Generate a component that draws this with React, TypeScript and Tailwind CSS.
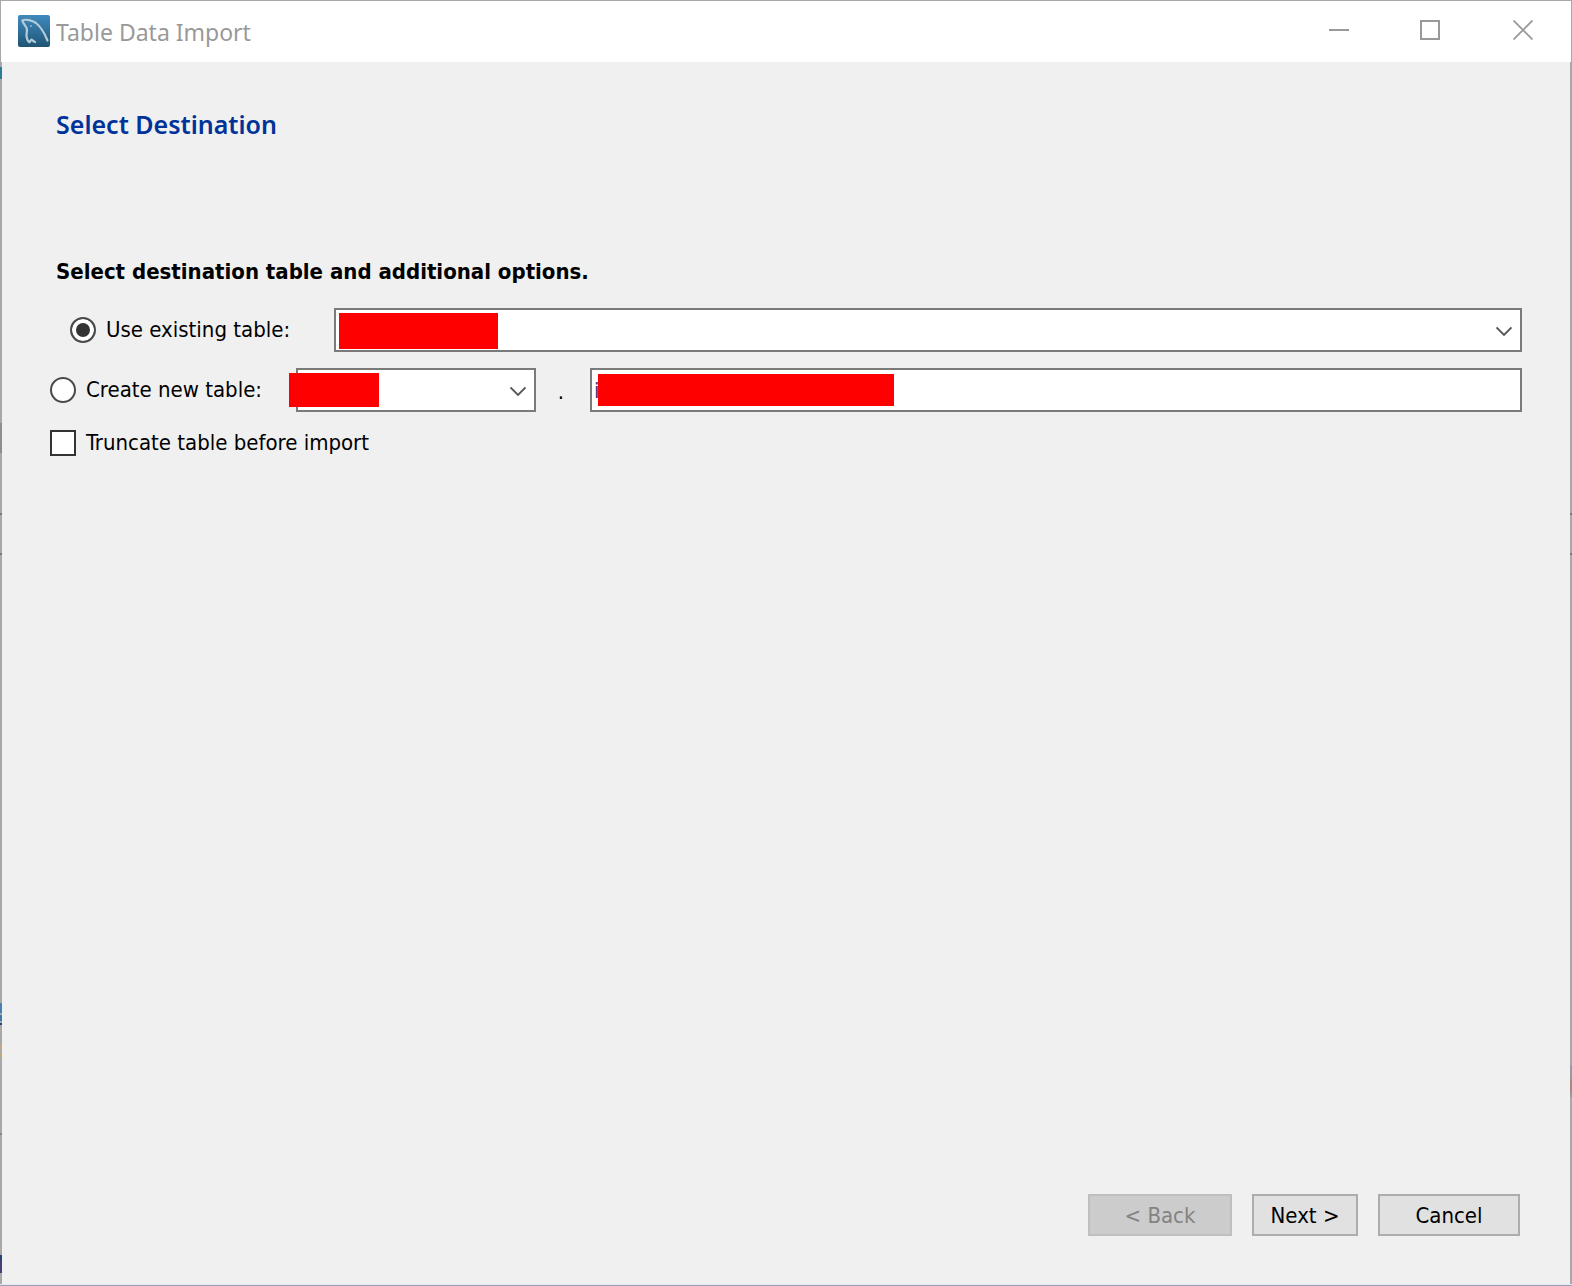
import type { ReactNode } from 'react';

// Slivers of the desktop that show through the thin window frame
const leftEdge = [
  'top-[66px] h-3 bg-[#2f7a94]',
  'top-[422px] h-[30px] bg-[#8e8e8e]',
  'top-[512px] h-0.5 bg-[#777777]',
  'top-[552px] h-0.5 bg-[#777777]',
  'top-[1002px] h-2.5 bg-[#4a7fb5]',
  'top-[1014px] h-1.5 bg-[#3f79ad]',
  'top-[1022px] h-0.5 bg-[#1f4478]',
  'top-[1044px] h-1 bg-[#c4a97c]',
  'top-[1052px] h-1 bg-[#c4a97c]',
  'top-[1132px] h-0.5 bg-[#838383]',
  'top-[1254px] h-1 bg-[#1f4478]',
  'top-[1258px] h-3.5 bg-[#453f78]',
];

const rightEdge = [
  'top-[512px] h-0.5 bg-[#777777]',
  'top-[552px] h-0.5 bg-[#777777]',
  'top-[1064px] h-8 bg-[#9a9a9c]',
  'top-[1078px] h-3.5 bg-[#a08c80]',
];

function Logo() {
  return (
    <svg className="w-8 h-8" viewBox="0 0 32 32" fill="none" aria-hidden="true">
      <defs>
        <linearGradient id="logo-bg" x1="0" y1="0" x2="0" y2="1">
          <stop offset="0" stopColor="#3f8abc" />
          <stop offset="0.5" stopColor="#2f709a" />
          <stop offset="1" stopColor="#1f5474" />
        </linearGradient>
      </defs>
      <rect width="32" height="32" rx="2" fill="url(#logo-bg)" />
      <g stroke="#b4cbd9" strokeWidth="2.2" strokeLinecap="round" strokeLinejoin="round">
        <path d="M4.5 5.5C8 3.8 14 5.2 18 8C23 12 26.5 18 29.5 25.5" />
        <path d="M4.5 5.5C5 8.5 7 10 8.6 13C9.8 16 8.2 18 8.5 21C9 24 9.6 26.5 11.5 27.2C12.5 26 12.6 25 13.6 24.6C14.6 25.6 15.6 26.4 17 27" />
      </g>
      <circle cx="13" cy="11" r="1" fill="#8fb3c8" />
    </svg>
  );
}

function Chevron() {
  return (
    <svg
      className="absolute right-2.5 top-[18px] w-4 h-[11px] pointer-events-none"
      viewBox="0 0 16 11"
      fill="none"
      stroke="#555555"
      strokeWidth="1.8"
      aria-hidden="true"
    >
      <polyline points="0.5 1.5 8 9 15.5 1.5" />
    </svg>
  );
}

function Combo({ label, children }: { label: string; children: ReactNode }) {
  return (
    <div className="relative h-11">
      <select
        aria-label={label}
        className="block w-full h-full appearance-none border-2 border-[#7a7a7a] bg-white px-1"
      />
      <Chevron />
      {children}
    </div>
  );
}

const radio =
  'appearance-none shrink-0 w-[26px] h-[26px] rounded-full border-2 border-[#4a4a4a] bg-white checked:bg-[#333333] shadow-[inset_0_0_0_4px_#ffffff]';

export default function App() {
  return (
    <div className="relative min-h-screen flex flex-col bg-[#f0f0f0] border-t border-b border-t-[#a8a8a8] border-b-[#9a9fb0] font-['DejaVu_Sans_Condensed','DejaVu_Sans',sans-serif] text-[22px] leading-7 text-black">
      {/* Title bar */}
      <header className="flex items-center justify-between h-[61px] bg-white border-x border-[#a8a8a8] pl-[17px] pb-px">
        <div className="flex items-center gap-1.5">
          <Logo />
          <span className="pt-0.5 font-['Noto_Sans',sans-serif] text-[23px] leading-8 text-[#999999]">
            Table Data Import
          </span>
        </div>
        <div className="flex h-full pb-0.5">
          <button type="button" aria-label="Minimize" className="flex w-[92px] items-center justify-center">
            <svg className="w-5 h-5" viewBox="0 0 20 20" stroke="#999999" strokeWidth="2">
              <path d="M0 10H20" />
            </svg>
          </button>
          <button type="button" aria-label="Maximize" className="flex w-[90px] items-center justify-center">
            <svg className="w-5 h-5" viewBox="0 0 20 20" fill="none" stroke="#999999" strokeWidth="2">
              <rect x="1" y="1" width="18" height="18" />
            </svg>
          </button>
          <button type="button" aria-label="Close" className="flex w-24 items-center justify-center">
            <svg className="w-5 h-5" viewBox="0 0 20 20" stroke="#999999" strokeWidth="1.8">
              <path d="M0.5 0.5L19.5 19.5M19.5 0.5L0.5 19.5" />
            </svg>
          </button>
        </div>
      </header>

      {/* Wizard page */}
      <main className="flex-1 flex flex-col border-x-2 border-[#a8a8a8] px-12 pt-[46px]">
        <h1 className="pl-1.5 font-['Noto_Sans',sans-serif] text-[25px] leading-8 font-semibold text-[#003399]">
          Select Destination
        </h1>
        <h2 className="mt-[118px] pl-1.5 font-bold">Select destination table and additional options.</h2>

        <div className="mt-[22px] flex items-center pl-5">
          <label className="flex items-center gap-2.5 w-[264px]">
            <input type="radio" name="target" defaultChecked className={radio} />
            Use existing table:
          </label>
          <div className="flex-1">
            <Combo label="Existing table">
              <span className="absolute left-[5px] top-[5px] w-[159px] h-9 bg-[#ff0000]" />
            </Combo>
          </div>
        </div>

        <div className="mt-4 flex items-center">
          <label className="flex items-center gap-2.5 w-[246px]">
            <input type="radio" name="target" className={radio} />
            Create new table:
          </label>
          <div className="w-60">
            <Combo label="Schema">
              <span className="absolute -left-[7px] top-[5px] w-[90px] h-[34px] bg-[#ff0000]" />
            </Combo>
          </div>
          <span className="w-[54px] pt-1 pr-1 text-center">.</span>
          <div className="relative flex-1 h-11">
            <input
              type="text"
              aria-label="New table name"
              defaultValue="i"
              className="block w-full h-full border-2 border-[#7a7a7a] bg-white px-0.5 text-[#333388]"
            />
            <span className="absolute left-2 top-1.5 w-[296px] h-8 bg-[#ff0000]" />
          </div>
        </div>

        <label className="mt-[17px] flex items-center gap-2.5 self-start">
          <input
            type="checkbox"
            className="appearance-none shrink-0 w-[26px] h-[26px] border-2 border-[#333333] bg-white checked:bg-[#333333]"
          />
          Truncate table before import
        </label>

        {/* Wizard buttons */}
        <footer className="mt-auto flex justify-end gap-5 pr-0.5 pb-12">
          <button
            type="button"
            disabled
            className="w-36 h-[42px] pt-0.5 border-2 border-[#bfbfbf] bg-[#cccccc] text-[#838383]"
          >
            &lt; Back
          </button>
          <button type="button" className="w-[106px] h-[42px] pt-0.5 border-2 border-[#adadad] bg-[#e1e1e1]">
            Next &gt;
          </button>
          <button type="button" className="w-[142px] h-[42px] pt-0.5 border-2 border-[#adadad] bg-[#e1e1e1]">
            Cancel
          </button>
        </footer>
      </main>
      <div className="h-px bg-[#e6eaf6]" />

      {leftEdge.map((edge) => (
        <span key={edge} className={`absolute left-0 w-0.5 ${edge}`} />
      ))}
      {rightEdge.map((edge) => (
        <span key={edge} className={`absolute right-0 w-0.5 ${edge}`} />
      ))}
    </div>
  );
}
